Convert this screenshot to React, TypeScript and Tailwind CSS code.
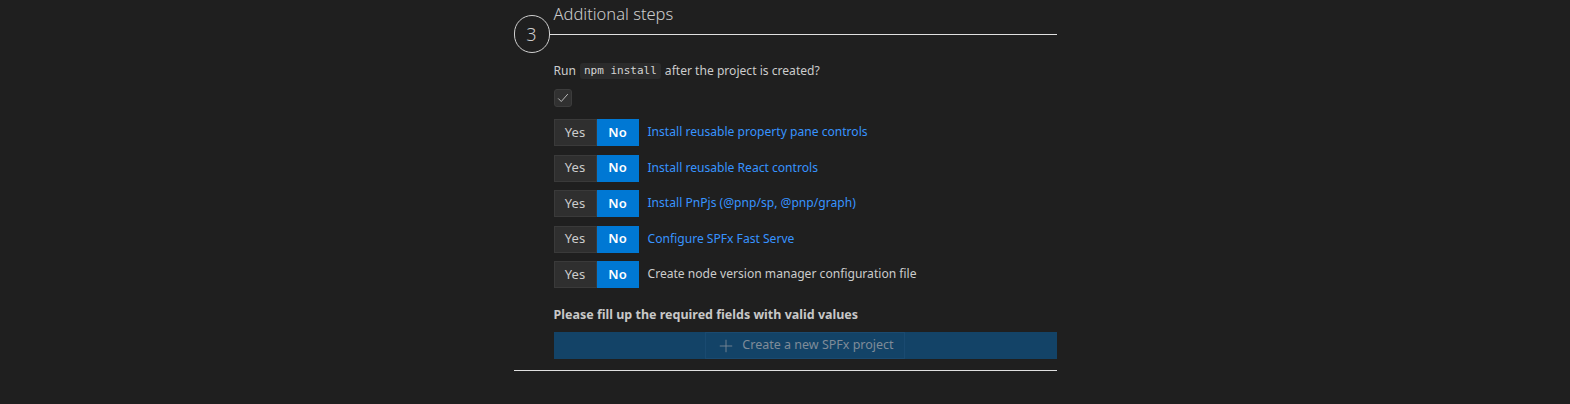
import { Plus } from "lucide-react";

const options = [
  { label: "Install reusable property pane controls", link: true },
  { label: "Install reusable React controls", link: true },
  { label: "Install PnPjs (@pnp/sp, @pnp/graph)", link: true },
  { label: "Configure SPFx Fast Serve", link: true },
  { label: "Create node version manager configuration file", link: false },
];

function YesNo({ label, link }: { label: string; link: boolean }) {
  return (
    <div className="flex h-[27px] items-center">
      <button
        type="button"
        className="h-full w-[43px] border border-[#3a3a3a] bg-[#2f2f2f] text-[13px] text-[#cccccc]"
      >
        Yes
      </button>
      <button
        type="button"
        className="h-full w-[42px] bg-[#0078d4] text-[13px] font-semibold text-white"
      >
        No
      </button>
      <span
        className={`ml-[9px] text-[12.1px] ${link ? "text-[#3794ff]" : "text-[#cccccc]"}`}
      >
        {label}
      </span>
    </div>
  );
}

export default function App() {
  return (
    <div
      className="min-h-screen bg-[#1f1f1f] text-[#cccccc]"
      style={{ fontFamily: '"Noto Sans", "Open Sans", sans-serif' }}
    >
      <div className="mx-auto w-[543px]">
        <div className="flex">
          <div className="mt-[15px] flex h-[38px] w-[36px] shrink-0 items-center justify-center rounded-full border border-[#d0d0d0] text-[18px] font-light text-[#cccccc]">
            3
          </div>
          <div className="flex-1">
            <h2 className="h-[35px] border-b border-[#e0e0e0] pl-[4px] pt-[2px] text-[16.5px] font-light leading-[24px] text-[#cccccc]">
              Additional steps
            </h2>
          </div>
        </div>

        <div className="pl-[40px]">
          <p className="mt-[9px] flex items-center text-[12.1px] leading-[18px]">
            Run
            <code
              className="mx-[4px] rounded-[3px] bg-[#2b2b2b] px-[4px] text-[11px] leading-[16px] text-[#d4d4d4]"
              style={{ fontFamily: '"DejaVu Sans Mono", monospace' }}
            >
              npm install
            </code>
            after the project is created?
          </p>

          <div className="mt-[9px] flex h-[18px] w-[18px] items-center justify-center rounded-[3px] border border-[#3c3c3c] bg-[#313131]">
            <svg width="14" height="14" viewBox="0 0 16 16" fill="none">
              <path d="M2.5 8.5 L6 12 L13.5 3.5" stroke="#cccccc" strokeWidth="1" />
            </svg>
          </div>

          <div className="mt-[12px] flex flex-col gap-[8.5px]">
            {options.map((o) => (
              <YesNo key={o.label} label={o.label} link={o.link} />
            ))}
          </div>

          <p className="mt-[18px] text-[12.5px] font-bold leading-[18px] text-[#c8c8c8]">
            Please fill up the required fields with valid values
          </p>

          <div className="mt-[8px] flex h-[27px] justify-center bg-[#134367]">
            <div className="flex items-center gap-[6px] border border-[#1a4a70] px-[10px] text-[12.5px] text-[#7f8c99]">
              <Plus size={20} strokeWidth={1} />
              Create a new SPFx project
            </div>
          </div>
        </div>

        <div className="mt-[11px] h-px bg-[#e0e0e0]" />
      </div>
    </div>
  );
}
